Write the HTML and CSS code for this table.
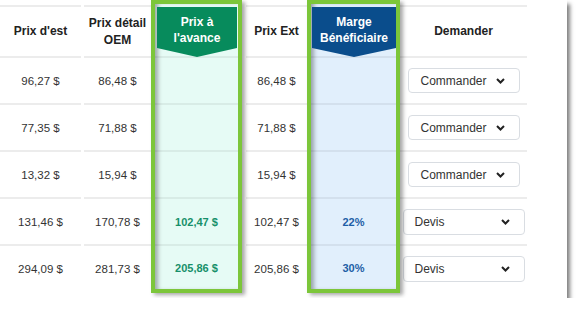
FILE: index.html
```html
<!DOCTYPE html>
<html lang="fr">
<head>
<meta charset="utf-8">
<title>Prix</title>
<link rel="stylesheet" href="styles.css">
</head>
<body>
<div class="card">
  <div class="table">
    <div class="col c1">
      <div class="cell head">Prix d'est</div>
      <div class="cell">96,27 $</div>
      <div class="cell">77,35 $</div>
      <div class="cell">13,32 $</div>
      <div class="cell">131,46 $</div>
      <div class="cell last">294,09 $</div>
    </div>
    <div class="col c2">
      <div class="cell head">Prix détail<br>OEM</div>
      <div class="cell">86,48 $</div>
      <div class="cell">71,88 $</div>
      <div class="cell">15,94 $</div>
      <div class="cell">170,78 $</div>
      <div class="cell last">281,73 $</div>
    </div>
    <div class="col hl green">
      <div class="cell head"><div class="banner">Prix à<br>l'avance</div></div>
      <div class="cell"></div>
      <div class="cell"></div>
      <div class="cell"></div>
      <div class="cell val">102,47 $</div>
      <div class="cell val last">205,86 $</div>
    </div>
    <div class="col c4">
      <div class="cell head">Prix Ext</div>
      <div class="cell">86,48 $</div>
      <div class="cell">71,88 $</div>
      <div class="cell">15,94 $</div>
      <div class="cell">102,47 $</div>
      <div class="cell last">205,86 $</div>
    </div>
    <div class="col hl blue">
      <div class="cell head"><div class="banner">Marge<br>Bénéficiaire</div></div>
      <div class="cell"></div>
      <div class="cell"></div>
      <div class="cell"></div>
      <div class="cell val">22%</div>
      <div class="cell val last">30%</div>
    </div>
    <div class="col c6">
      <div class="cell head">Demander</div>
      <div class="cell"><div class="select cmd"><span>Commander</span><svg width="9" height="6" viewBox="0 0 9 6"><path d="M1 1l3.5 3.5L8 1" fill="none" stroke="#222" stroke-width="2"/></svg></div></div>
      <div class="cell"><div class="select cmd"><span>Commander</span><svg width="9" height="6" viewBox="0 0 9 6"><path d="M1 1l3.5 3.5L8 1" fill="none" stroke="#222" stroke-width="2"/></svg></div></div>
      <div class="cell"><div class="select cmd"><span>Commander</span><svg width="9" height="6" viewBox="0 0 9 6"><path d="M1 1l3.5 3.5L8 1" fill="none" stroke="#222" stroke-width="2"/></svg></div></div>
      <div class="cell"><div class="select devis"><span>Devis</span><svg width="9" height="6" viewBox="0 0 9 6"><path d="M1 1l3.5 3.5L8 1" fill="none" stroke="#222" stroke-width="2"/></svg></div></div>
      <div class="cell last"><div class="select devis"><span>Devis</span><svg width="9" height="6" viewBox="0 0 9 6"><path d="M1 1l3.5 3.5L8 1" fill="none" stroke="#222" stroke-width="2"/></svg></div></div>
    </div>
  </div>
</div>
</body>
</html>
```
FILE: styles.css
```css
html, body {
  margin: 0;
  padding: 0;
  background: #fff;
}
body {
  font-family: "Liberation Sans", Arial, sans-serif;
  color: #333;
}
.card {
  width: 567px;
  height: 298px;
  background: #fff;
  box-shadow: 3px 4px 4px rgba(0, 0, 0, 0.5);
}
.table {
  display: flex;
  width: 563px;
  align-items: flex-start;
}
.col {
  display: flex;
  flex-direction: column;
  padding-top: 5px;
}
.cell {
  box-sizing: border-box;
  height: 47px;
  border-bottom: 2px solid #ececec;
  display: flex;
  align-items: center;
  justify-content: center;
  font-size: 11.5px;
  text-align: center;
}
.cell.last {
  border-bottom: none;
  height: 45px;
}
.cell.head {
  height: 53px;
  border-top: 2px solid #ececec;
  font-size: 12px;
  font-weight: bold;
  line-height: 17px;
  color: #222;
}
.c1 { width: 84px; padding-right: 3px; box-sizing: border-box; }
.c2 { width: 67px; }
.c4 { width: 65px; padding-left: 4px; box-sizing: border-box; }
.c6 { flex: 1; padding-right: 36px; }

.hl {
  padding-top: 0;
  border: 4px solid #7cc63a;
  box-shadow: 3px 2px 4px rgba(0, 0, 0, 0.35), inset 5px 0 4px -2px rgba(0, 0, 0, 0.32);
  position: relative;
  z-index: 1;
}
.hl .cell {
  border-bottom-color: rgba(0, 0, 0, 0.06);
}
.hl .cell.last {
  height: 43px;
}
.hl .cell.head {
  height: 54px;
  border-top: none;
  align-items: flex-start;
  justify-content: stretch;
}
.green { width: 91px; box-sizing: border-box; background: #e6fbf5; }
.blue { width: 93px; box-sizing: border-box; background: #e1effc; }
.banner {
  flex: 1;
  margin: 3px 1px 0 2px;
  height: 50px;
  box-sizing: border-box;
  padding-top: 7px;
  line-height: 16px;
  color: #fff;
  font-size: 12px;
  font-weight: bold;
  clip-path: polygon(0 0, 100% 0, 100% 41px, 50% 50px, 0 41px);
}
.green .banner { background: #078b5c; }
.blue .banner { background: #0a4d8c; margin-left: 1px; margin-right: 0; }
.val { font-weight: bold; font-size: 11px; }
.green .val { color: #16906a; }
.blue .val { color: #1d5ea6; }

.select {
  box-sizing: border-box;
  display: flex;
  align-items: center;
  justify-content: space-between;
  height: 25px;
  border: 1px solid #d9dde2;
  border-radius: 4px;
  background: #fff;
  font-size: 12px;
  color: #333;
  padding: 0 14px 0 11px;
}
.select.cmd { width: 112px; padding-left: 12px; }
.select.devis { width: 122px; height: 26px; }
```
